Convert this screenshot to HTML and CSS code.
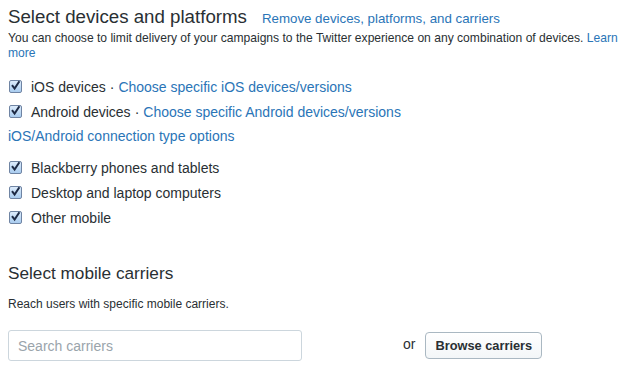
FILE: index.html
```html
<!DOCTYPE html>
<html>
<head>
<meta charset="utf-8">
<link rel="stylesheet" href="styles.css">
</head>
<body>
<div class="page">
  <div class="head">
    <h2 class="title">Select devices and platforms</h2>
    <a class="link remove">Remove devices, platforms, and carriers</a>
  </div>
  <p class="desc">You can choose to limit delivery of your campaigns to the Twitter experience on any combination of devices. <a class="link">Learn</a> <a class="link">more</a></p>
  <ul class="opts">
    <li class="opt"><span class="cb"><svg viewBox="0 0 13 13" width="13" height="13"><path d="M3 6.2 L5.6 9.6 L10.4 2.2" fill="none" stroke="#1d2a44" stroke-width="2"/></svg></span>iOS devices<span class="dot">·</span><a class="link">Choose specific iOS devices/versions</a></li>
    <li class="opt"><span class="cb"><svg viewBox="0 0 13 13" width="13" height="13"><path d="M3 6.2 L5.6 9.6 L10.4 2.2" fill="none" stroke="#1d2a44" stroke-width="2"/></svg></span>Android devices<span class="dot">·</span><a class="link">Choose specific Android devices/versions</a></li>
    <li class="opt conn"><a class="link">iOS/Android connection type options</a></li>
    <li class="opt gap"><span class="cb"><svg viewBox="0 0 13 13" width="13" height="13"><path d="M3 6.2 L5.6 9.6 L10.4 2.2" fill="none" stroke="#1d2a44" stroke-width="2"/></svg></span>Blackberry phones and tablets</li>
    <li class="opt"><span class="cb"><svg viewBox="0 0 13 13" width="13" height="13"><path d="M3 6.2 L5.6 9.6 L10.4 2.2" fill="none" stroke="#1d2a44" stroke-width="2"/></svg></span>Desktop and laptop computers</li>
    <li class="opt"><span class="cb"><svg viewBox="0 0 13 13" width="13" height="13"><path d="M3 6.2 L5.6 9.6 L10.4 2.2" fill="none" stroke="#1d2a44" stroke-width="2"/></svg></span>Other mobile</li>
  </ul>
  <h3 class="subtitle">Select mobile carriers</h3>
  <p class="reach">Reach users with specific mobile carriers.</p>
  <div class="search-row">
    <input class="search" type="text" placeholder="Search carriers">
    <span class="or">or</span>
    <button class="btn">Browse carriers</button>
  </div>
</div>
</body>
</html>
```
FILE: styles.css
```css
html, body { margin: 0; padding: 0; background: #fff; }
body { font-family: "Liberation Sans", Arial, sans-serif; color: #292f33; }
.page { padding: 0 8px; }
.head { display: flex; align-items: baseline; gap: 15px; padding-top: 6px; }
.title { margin: 0; font-size: 18.7px; font-weight: normal; color: #292f33; line-height: 22px; }
.link { color: #2a75b7; text-decoration: none; }
.remove { font-size: 13.3px; }
.desc { margin: 3px 0 0; font-size: 12.1px; line-height: 15px; }
.opts { list-style: none; margin: 13px 0 0; padding: 0; }
.opt { display: flex; align-items: center; font-size: 14px; height: 25px; }
.conn { height: 24px; }
.gap { margin-top: 7px; }
.cb { width: 13px; height: 13px; box-sizing: border-box; border: 1px solid #6f84a3; border-radius: 2px; background: linear-gradient(#dcebfb, #a9ccef); margin: 0 9px 0 1px; position: relative; }
.cb svg { position: absolute; left: -1px; top: -2px; }
.dot { margin: 0 4px; }
.subtitle { margin: 32px 0 0; font-size: 17.2px; font-weight: normal; line-height: 22px; }
.reach { margin: 13px 0 0; font-size: 12px; line-height: 15px; }
.search-row { display: flex; align-items: center; margin-top: 18px; }
.search { width: 294px; height: 31px; box-sizing: border-box; border: 1px solid #ccd6dd; border-radius: 3px; padding: 0 9px; font-family: inherit; font-size: 14px; color: #292f33; }
.search::placeholder { color: #9aa4ab; }
.or { margin-left: 101px; font-size: 14px; margin-bottom: 3px; }
.btn { margin-left: 10px; height: 27px; box-sizing: border-box; padding: 0 9px; border: 1px solid #aab8c2; border-radius: 4px; background: linear-gradient(#fff, #f3f6f8); font-family: inherit; font-size: 12.8px; font-weight: bold; color: #292f33; }
```
